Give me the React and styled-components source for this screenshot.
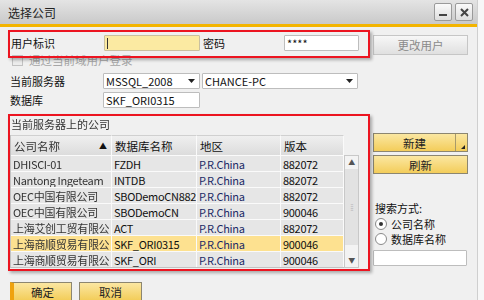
import styled, { createGlobalStyle } from 'styled-components';

const Global = createGlobalStyle`
  html, body { margin: 0; padding: 0; background: #f7f7f7; }
  body { font-family: "Noto Sans CJK SC", "Noto Sans", sans-serif; font-size: 11px; color: #111; }
`

const Window = styled.div`
    position: relative;
    width: 477px;
    height: 300px;
    overflow: hidden;
    background: #f0f0f0;
    border-right: 1px solid #cfcfcf;
`
const TitleBar = styled.div`
    height: 24px;
    display: flex;
    align-items: center;
    justify-content: space-between;
    padding: 0 4px 0 8px;
    background: linear-gradient(#e4e4e4, #c9c9c9);
    border-bottom: 3px solid #f3b400;
`
const Title = styled.span`
    font-size: 12px;
    color: #222;
`
const WinButtons = styled.div`
    display: flex;
    gap: 3px;
`
const WinButton = styled.div`
    width: 16px;
    height: 16px;
    border: 1px solid #9a9a9a;
    border-radius: 2px;
    background: linear-gradient(#fafafa, #dedede);
    display: flex;
    align-items: center;
    justify-content: center;
`
const Body = styled.div`
    display: grid;
    grid-template-columns: 349px 95px;
    column-gap: 14px;
    align-items: start;
    padding: 8px 0 0 10px;
    height: 241px;
`
const Left = styled.div`
    display: flex;
    flex-direction: column;
`
const Right = styled.div`
    display: flex;
    flex-direction: column;
`
const Row = styled.div`
    display: flex;
    align-items: center;
    height: 16px;
    margin-top: ${p => p.$mt || 0}px;
`
const Label = styled.span`
    width: ${p => p.$w}px;
    flex-shrink: 0;
    padding-left: ${p => p.$pl || 0}px;
    box-sizing: border-box;
    white-space: nowrap;
`
const Input = styled.div`
    box-sizing: border-box;
    width: ${p => p.$w}px;
    height: 16px;
    flex-shrink: 0;
    border: 1px solid ${p => p.$yellow ? '#c9c0a0' : '#bdbdbd'};
    background: ${p => p.$yellow ? '#fbeaa2' : '#fff'};
    border-radius: 1px;
    padding: 0 2px;
    display: flex;
    align-items: center;
    margin-top: ${p => p.$mt || 0}px;
    margin-right: ${p => p.$mr || 0}px;
    line-height: 14px;
`
const Caret = styled.span`
    width: 1px;
    height: 11px;
    background: #333;
`
const Select = styled(Input)`
    justify-content: space-between;
    padding-right: 4px;
`
const Check = styled.span`
    width: 9px;
    height: 9px;
    margin: 0 6px 0 2px;
    border: 1px solid #c2c2c2;
    background: #ececec;
`
const Muted = styled.span`
    color: #a6a6a6;
    font-size: 11.5px;
`
const Blurred = styled.span`
    filter: blur(0.7px);
    color: #333;
    white-space: nowrap;
    overflow: hidden;
`
const Table = styled.div`
    display: flex;
    margin-top: 3px;
    letter-spacing: -0.3px;
`
const Grid = styled.div`
    display: grid;
    grid-template-columns: 101px 85px 84px 63px;
    grid-template-rows: 20px;
    grid-auto-rows: 16px;
    border-left: 1px solid #c2c2c2;
    border-bottom: 1px solid #c2c2c2;
`
const Head = styled.div`
    box-sizing: border-box;
    display: flex;
    align-items: center;
    justify-content: space-between;
    padding: 0 4px 0 3px;
    background: linear-gradient(#efefef, #dcdcdc);
    border-right: 1px solid #fafafa;
    border-top: 1px solid #d0d0d0;
    font-size: 11.5px;
    letter-spacing: 0;
`
const Cell = styled.div`
    box-sizing: border-box;
    display: flex;
    align-items: center;
    padding: 0 2px;
    background: ${p => p.$sel ? '#fde190' : '#e6e6e6'};
    border-right: 1px solid #fafafa;
    border-top: 1px solid #fafafa;
    color: ${p => p.$blue ? '#1c2a66' : '#111'};
    white-space: nowrap;
    overflow: hidden;
`
const ScrollCol = styled.div`
    display: flex;
    flex-direction: column;
    padding-top: 20px;
`
const Scrollbar = styled.div`
    width: 15px;
    flex: 1;
    box-sizing: border-box;
    border: 1px solid #c8c8c8;
    background: #f3f3f3;
    display: flex;
    flex-direction: column;
    align-items: center;
`
const Arrow = styled.span`
    font-size: 7px;
    color: #555;
    height: 13px;
    line-height: 13px;
`
const Thumb = styled.div`
    width: 13px;
    height: 76px;
    background: #e2e2e2;
    display: flex;
    align-items: center;
    justify-content: center;
    color: #bbb;
    font-size: 8px;
    letter-spacing: -1px;
`
const Button = styled.div`
    box-sizing: border-box;
    width: ${p => p.$w || 95}px;
    height: ${p => p.$h || 19}px;
    margin-top: ${p => p.$mt || 0}px;
    border: 1px solid ${p => p.$gray ? '#c6c6c6' : '#8c8670'};
    background: ${p => p.$gray ? 'linear-gradient(#f7f7f7, #e0e0e0)' : 'linear-gradient(#fbe7a2, #f3cd5a)'};
    color: ${p => p.$gray ? '#8a8a8a' : '#222'};
    border-left: ${p => p.$default ? '4px solid #efa20e' : undefined};
    display: flex;
    align-items: stretch;
    font-size: 11.5px;
`
const ButtonText = styled.span`
    flex: 1;
    display: flex;
    align-items: center;
    justify-content: center;
`
const Split = styled.span`
    width: 12px;
    border-left: 1px solid #a89a6a;
    display: flex;
    align-items: flex-end;
    justify-content: flex-end;
    padding: 0 2px 2px 0;
    box-sizing: border-box;
`
const SearchLabel = styled.div`
    margin-top: 26px;
    padding-left: 2px;
    height: 16px;
    line-height: 16px;
`
const Radio = styled.div`
    display: flex;
    align-items: center;
    height: 15px;
    padding-left: 2px;
    gap: 4px;
`
const RadioDot = styled.span`
    width: 10px;
    height: 10px;
    border-radius: 50%;
    border: 1px solid #8a8a8a;
    background: #fff;
    display: flex;
    align-items: center;
    justify-content: center;
    &::after {
        content: '';
        width: 4px;
        height: 4px;
        border-radius: 50%;
        background: ${p => p.$on ? '#333' : 'transparent'};
    }
`
const Footer = styled.div`
    display: flex;
    gap: 7px;
    padding: 6px 0 0 10px;
`
const Highlight = styled.div`
    position: absolute;
    left: ${p => p.$x}px;
    top: ${p => p.$y}px;
    width: ${p => p.$w}px;
    height: ${p => p.$h}px;
    box-sizing: border-box;
    border: 2px solid #ec1420;
    box-shadow: 2px 2px 3px rgba(0, 0, 0, 0.3);
    pointer-events: none;
`

const rows = [
    ['DHISCI-01', 'FZDH', '882072'],
    ['Nantong Ingeteam', 'INTDB', '882072'],
    ['OEC中国有限公司', 'SBODemoCN882', '882072'],
    ['OEC中国有限公司', 'SBODemoCN', '900046'],
    ['上海艾创工贸有限公', 'ACT', '882072'],
    ['上海商顺贸易有限公', 'SKF_ORI0315', '900046', true],
    ['上海商顺贸易有限公', 'SKF_ORI', '900046'],
];

const DownArrow = () => (
    <svg width="7" height="4" viewBox="0 0 7 4"><path d="M0 0h7L3.5 4z" fill="#222" /></svg>
);

const App = () => {
    return (
        <Window>
            <Global />
            <TitleBar>
                <Title>选择公司</Title>
                <WinButtons>
                    <WinButton>
                        <svg width="10" height="10" viewBox="0 0 10 10"><rect x="1" y="7" width="8" height="2" fill="#444" /></svg>
                    </WinButton>
                    <WinButton>
                        <svg width="9" height="9" viewBox="0 0 9 9"><path d="M1 1l7 7M8 1l-7 7" stroke="#444" strokeWidth="2" /></svg>
                    </WinButton>
                </WinButtons>
            </TitleBar>
            <Body>
                <Left>
                    <Row>
                        <Label $w={94} $pl={1}>用户标识</Label>
                        <Input $w={96} $yellow $mr={3}><Caret /></Input>
                        <Label $w={81}>密码</Label>
                        <Input $w={75}>****</Input>
                    </Row>
                    <Row $mt={1}>
                        <Check />
                        <Muted>通过当前域用户登录</Muted>
                    </Row>
                    <Row $mt={5}>
                        <Label $w={93}>当前服务器</Label>
                        <Select $w={97} $mr={2}>MSSQL_2008<DownArrow /></Select>
                        <Select $w={156}>CHANCE-PC<DownArrow /></Select>
                    </Row>
                    <Row $mt={3}>
                        <Label $w={93}>数据库</Label>
                        <Input $w={97}>SKF_ORI0315</Input>
                    </Row>
                    <Row $mt={8}>
                        <Label $w={200} $pl={1}><Blurred>当前服务器上的公司</Blurred></Label>
                    </Row>
                    <Table>
                        <Grid>
                            <Head><Blurred>公司名称</Blurred><span style={{ fontSize: 8 }}>▲</span></Head>
                            <Head>数据库名称</Head>
                            <Head>地区</Head>
                            <Head>版本</Head>
                            {rows.map(([name, db, ver, sel], i) => (
                                <>
                                    <Cell key={'a' + i} $sel={sel}><Blurred>{name}</Blurred></Cell>
                                    <Cell key={'b' + i} $sel={sel}>{db}</Cell>
                                    <Cell key={'c' + i} $sel={sel} $blue>P.R.China</Cell>
                                    <Cell key={'d' + i} $sel={sel}>{ver}</Cell>
                                </>
                            ))}
                        </Grid>
                        <ScrollCol>
                            <Scrollbar>
                                <Arrow>▲</Arrow>
                                <Thumb>⁞⁞</Thumb>
                                <div style={{ flex: 1 }} />
                                <Arrow>▼</Arrow>
                            </Scrollbar>
                        </ScrollCol>
                    </Table>
                </Left>
                <Right>
                    <Button $gray $h={20}><ButtonText>更改用户</ButtonText></Button>
                    <Button $mt={78}>
                        <ButtonText>新建</ButtonText>
                        <Split>
                            <svg width="4" height="4" viewBox="0 0 4 4"><path d="M4 0v4H0z" fill="#222" /></svg>
                        </Split>
                    </Button>
                    <Button $mt={3}><ButtonText>刷新</ButtonText></Button>
                    <SearchLabel>搜索方式:</SearchLabel>
                    <Radio><RadioDot $on />公司名称</Radio>
                    <Radio><RadioDot />数据库名称</Radio>
                    <Input $w={94} $mt={4} />
                </Right>
            </Body>
            <Footer>
                <Button $w={62} $default><ButtonText>确定</ButtonText></Button>
                <Button $w={63}><ButtonText>取消</ButtonText></Button>
            </Footer>
            <Highlight $x={8} $y={30} $w={362} $h={28} />
            <Highlight $x={8} $y={114} $w={362} $h={157} />
        </Window>
    );
};

export default App;
